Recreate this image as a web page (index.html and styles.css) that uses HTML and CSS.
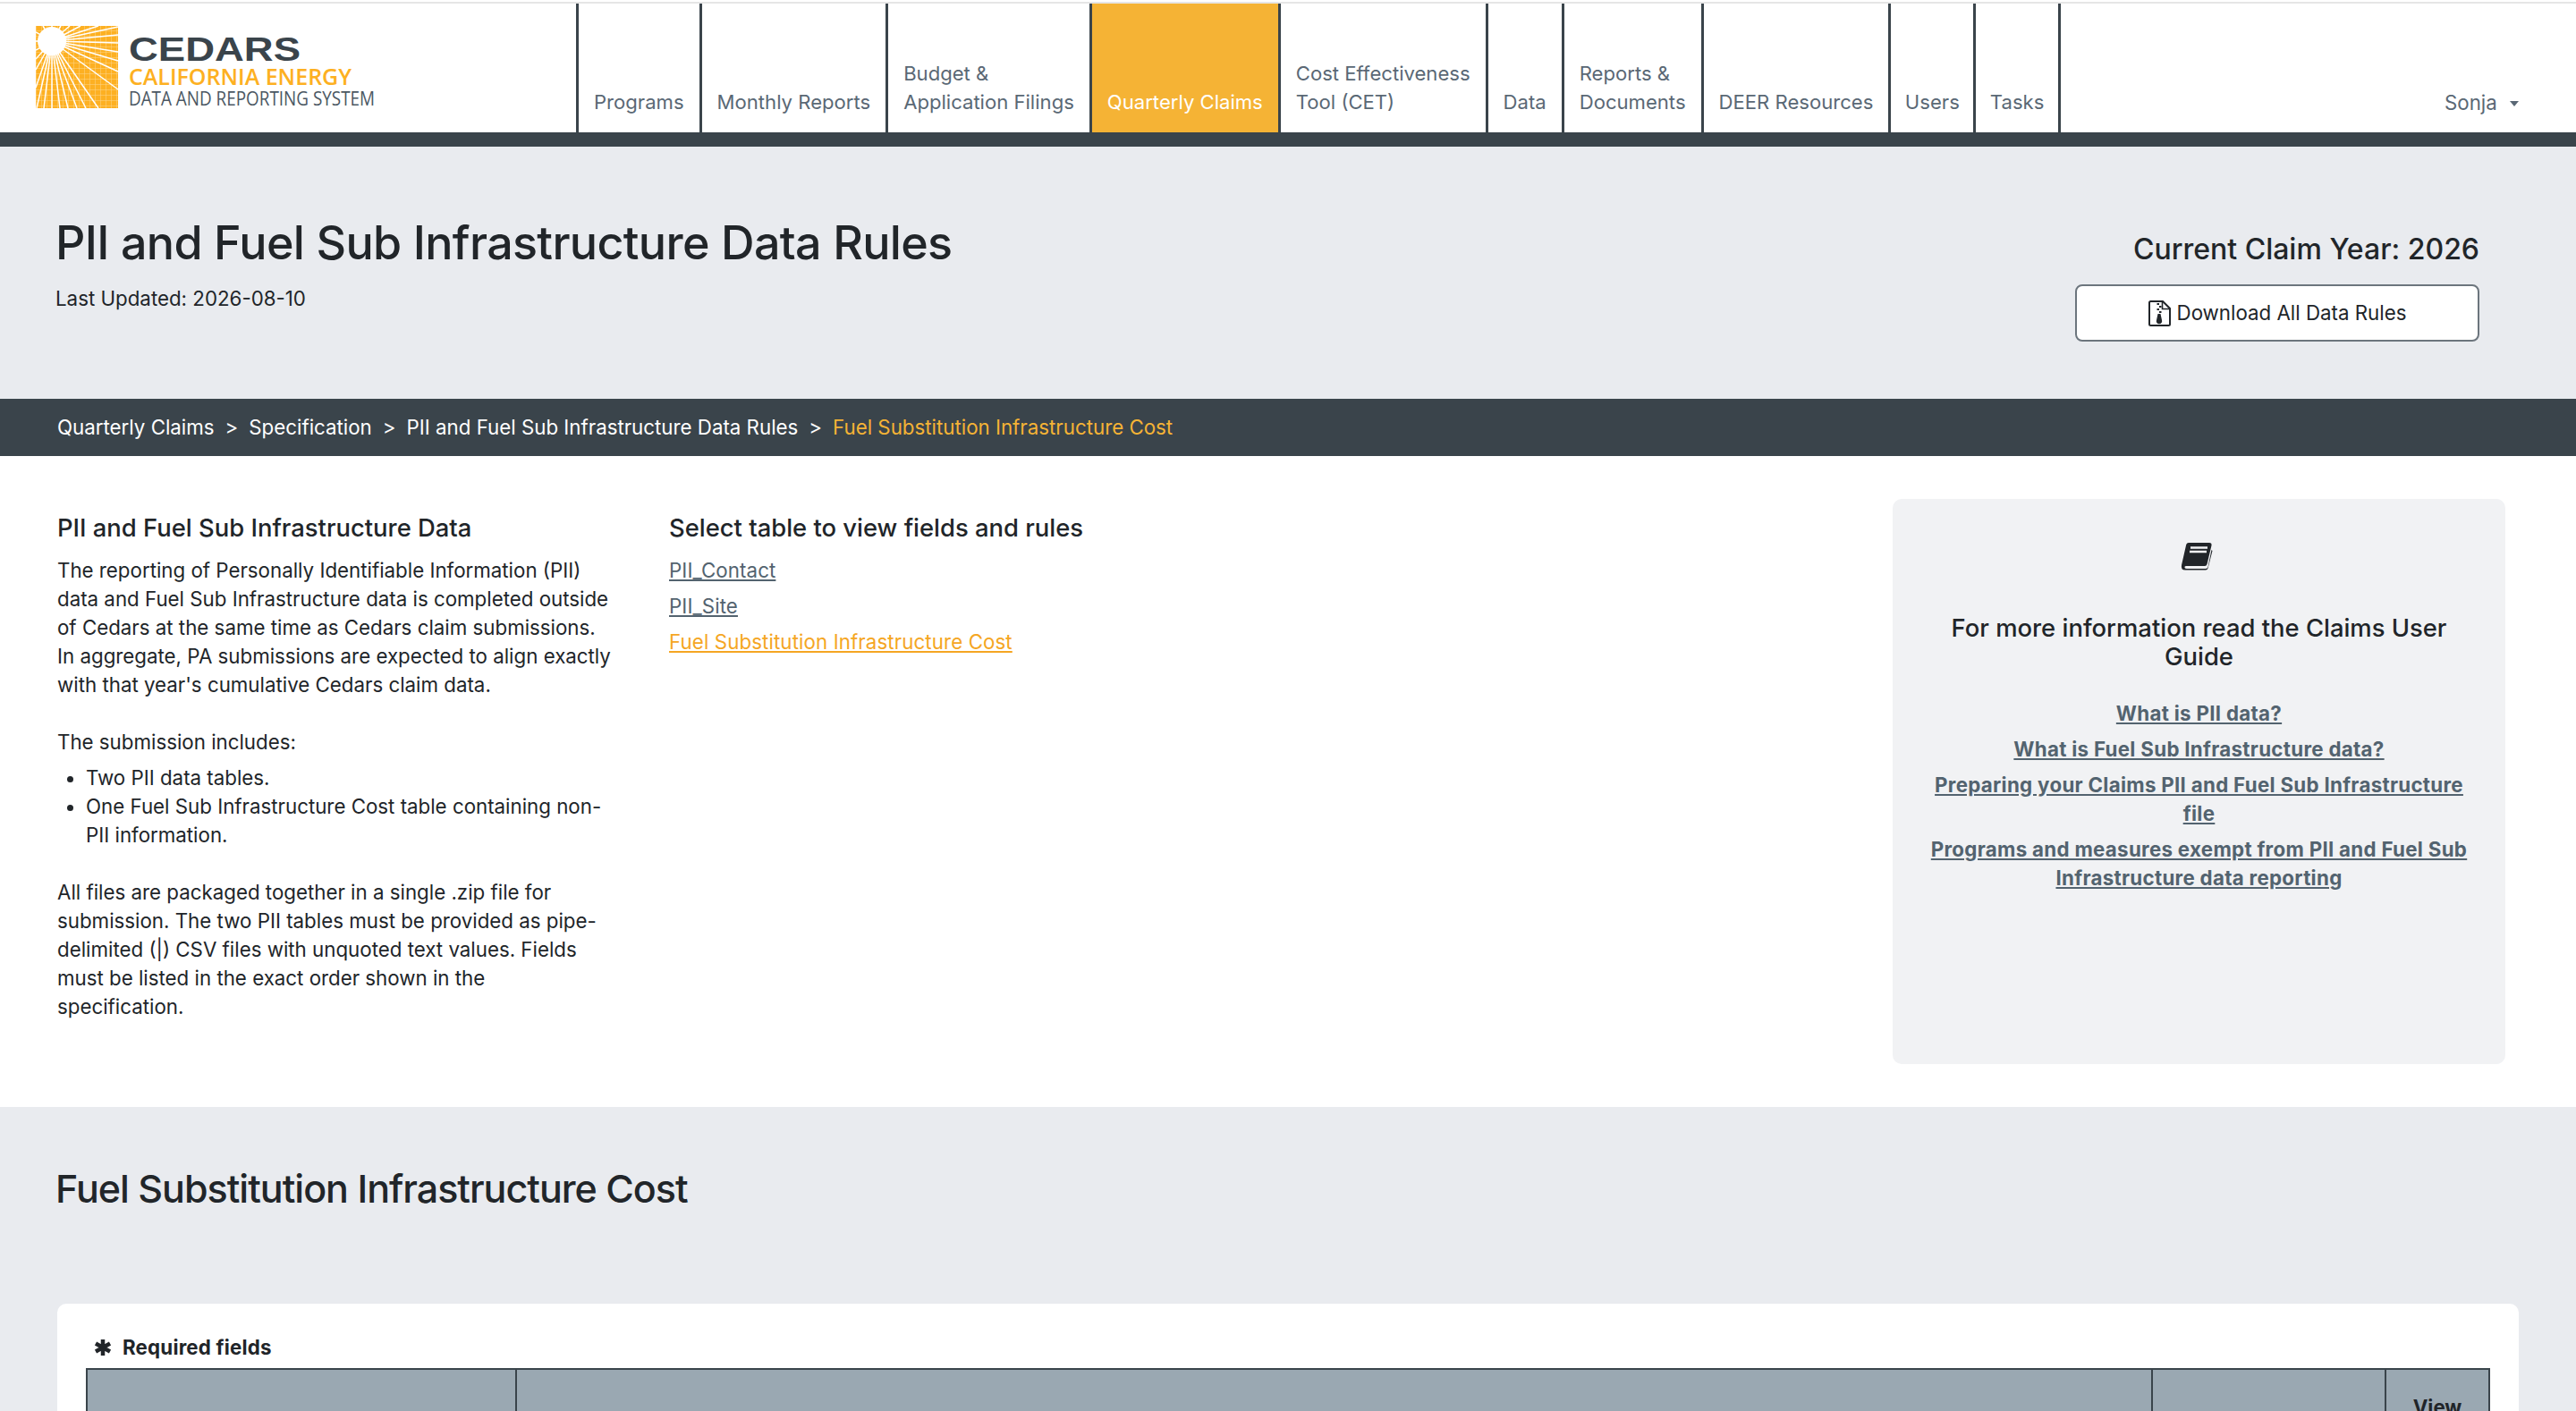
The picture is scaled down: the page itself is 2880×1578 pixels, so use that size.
FILE: index.html
```html
<!DOCTYPE html>
<html>
<head>
	<meta charset="utf-8">
	<title>PII and Fuel Sub Infrastructure Data Rules</title>
	<link rel="stylesheet" href="styles.css">
</head>
<body>
	<header class="topbar">
		<div class="brand">
			<svg class="logo" width="430" height="100" viewBox="0 0 430 100">
				<defs>
					<pattern id="grid" width="6" height="6" patternUnits="userSpaceOnUse">
						<rect width="6" height="6" fill="#fdb022"/>
						<path d="M0 0H6M0 0V6" stroke="#fed68a" stroke-width="1"/>
					</pattern>
				</defs>
				<rect x="0" y="1" width="92" height="92" fill="url(#grid)"/>
				<g stroke="#fff" stroke-width="1.5" fill="none">
					<path d="M18 18L92 2M18 18L92 11M18 18L92 20M18 18L92 30M18 18L92 40M18 18L92 52M18 18L92 72M18 18L70 93M18 18L56 93M18 18L46 93M18 18L36 93M18 18L27 93M18 18L18 93M18 18L9 93M18 18L1 93M18 18L0 70M18 18L0 50M18 18L0 38M18 18L0 28M18 18L0 18M18 18L0 8M18 18L8 1M18 18L18 1M18 18L28 1M18 18L38 1M18 18L50 1M18 18L70 1"/>
				</g>
				<circle cx="18" cy="18" r="16" fill="#fff"/>
				<text class="logo-name" x="104" y="40" textLength="192" lengthAdjust="spacingAndGlyphs">CEDARS</text>
				<text class="logo-state" x="104" y="67" textLength="249" lengthAdjust="spacingAndGlyphs">CALIFORNIA ENERGY</text>
				<text class="logo-sub" x="104" y="90" textLength="275" lengthAdjust="spacingAndGlyphs">DATA AND REPORTING SYSTEM</text>
			</svg>
		</div>
		<nav class="mainnav">
			<a href="#">Programs</a>
			<a href="#">Monthly Reports</a>
			<a href="#">Budget &amp;<br>Application Filings</a>
			<a href="#" class="active">Quarterly Claims</a>
			<a href="#">Cost Effectiveness<br>Tool (CET)</a>
			<a href="#">Data</a>
			<a href="#">Reports &amp;<br>Documents</a>
			<a href="#">DEER Resources</a>
			<a href="#" class="narrow">Users</a>
			<a href="#" class="narrow">Tasks</a>
		</nav>
		<a href="#" class="usermenu">Sonja <span class="caret"></span></a>
	</header>
	<div class="navband"></div>

	<section class="pagehead">
		<div>
			<h1>PII and Fuel Sub Infrastructure Data Rules</h1>
			<p class="updated">Last Updated: 2026-08-10</p>
		</div>
		<div class="claimyear">
			<h4>Current Claim Year: 2026</h4>
			<a href="#" class="btn-download">
				<svg width="25" height="29" viewBox="0 0 25 29">
					<path d="M1 2.5Q1 1 2.5 1H16L24 9V26.500Q24 28 22.500 28H2.500Q1 28 1 26.500Z" fill="none" stroke="#212529" stroke-width="2"/>
					<path d="M15.500 1.500V9.500H23.500" fill="none" stroke="#212529" stroke-width="1.600"/>
					<path d="M9.500 3h2.500v2H9.500zM12 6h2.500v2H12zM9.500 9h2.500v2H9.500zM12 12h2.500v2H12z" fill="#212529"/>
					<path d="M10.500 15h3l1.500 7a3.200 3.200 0 1 1-6 0z" fill="#212529"/>
				</svg>
				Download All Data Rules
			</a>
		</div>
	</section>

	<div class="crumbs">
		<a href="#">Quarterly Claims</a><span class="sep">&gt;</span><a href="#">Specification</a><span class="sep">&gt;</span><a href="#">PII and Fuel Sub Infrastructure Data Rules</a><span class="sep">&gt;</span><span class="current">Fuel Substitution Infrastructure Cost</span>
	</div>

	<section class="intro">
		<div class="intro-text">
			<h5>PII and Fuel Sub Infrastructure Data</h5>
			<p>The reporting of Personally Identifiable Information (PII) data and Fuel Sub Infrastructure data is completed outside of Cedars at the same time as Cedars claim submissions. In aggregate, PA submissions are expected to align exactly with that year's cumulative Cedars claim data.</p>
			<p class="lead-in">The submission includes:</p>
			<ul>
				<li>Two PII data tables.</li>
				<li>One Fuel Sub Infrastructure Cost table containing non-PII information.</li>
			</ul>
			<p>All files are packaged together in a single .zip file for submission. The two PII tables must be provided as pipe-delimited (|) CSV files with unquoted text values. Fields must be listed in the exact order shown in the specification.</p>
		</div>
		<div class="intro-tables">
			<h5>Select table to view fields and rules</h5>
			<a href="#">PII_Contact</a>
			<a href="#">PII_Site</a>
			<a href="#" class="selected">Fuel Substitution Infrastructure Cost</a>
		</div>
		<aside class="guide">
			<svg class="book" width="36" height="32" viewBox="0 0 36 32">
				<path d="M9 1H32Q35 1 34.500 4L29.500 25Q29 27 27 27H6Q4 27 4.500 29Q5 30 7 30H28Q30 30 30.500 28L34.500 9L35.500 10L30.500 29.500Q30 31.500 28 31.500H5Q0 31.500 1 26L6 4Q6.500 1 9 1Z" fill="#212529"/>
				<path d="M8 3H32L27 25H4Z" fill="#212529"/>
				<path d="M11 6.500H30M10 11H29" stroke="#f1f2f4" stroke-width="2.400"/>
			</svg>
			<h5>For more information read the Claims User Guide</h5>
			<a href="#">What is PII data?</a>
			<a href="#">What is Fuel Sub Infrastructure data?</a>
			<a href="#">Preparing your Claims PII and Fuel Sub Infrastructure file</a>
			<a href="#">Programs and measures exempt from PII and Fuel Sub Infrastructure data reporting</a>
		</aside>
	</section>

	<section class="tablesection">
		<h2>Fuel Substitution Infrastructure Cost</h2>
		<div class="tablecard">
			<p class="required">
				<svg width="20" height="20" viewBox="0 0 20 20"><path d="M10 1V19M2 5.500L18 14.500M18 5.500L2 14.500" stroke="#212529" stroke-width="4.500"/></svg>
				Required fields
			</p>
			<table class="fields">
				<thead>
					<tr>
						<th class="col-name"></th>
						<th class="col-desc"></th>
						<th class="col-type"></th>
						<th class="col-view">View</th>
					</tr>
				</thead>
			</table>
		</div>
	</section>
</body>
</html>
```

FILE: styles.css
```css
html, body {
	height: 100%;
	overflow: hidden;
}
body {
	margin: 0;
	background-color: #fff;
	color: #212529;
	font-family: Inter, "Liberation Sans", sans-serif;
	font-size: 22.3px;
	line-height: 32px;
}
a {
	color: #53636f;
}
h1, h2, h4, h5, p {
	margin: 0;
}

/* top navigation */
.topbar {
	display: flex;
	height: 144px;
	margin-top: 2px;
	border-top: 2px solid #e6e6e6;
	padding-right: 64px;
}
.brand {
	width: 644px;
	flex: none;
	padding: 24px 0 0 40px;
	box-sizing: border-box;
}
.logo {
	display: block;
}
.logo-name {
	font-family: "Liberation Sans", sans-serif;
	font-weight: bold;
	font-size: 36px;
	fill: #3a444b;
}
.logo-state {
	font-family: "Open Sans", sans-serif;
	font-size: 25px;
	font-weight: 600;
	fill: #fdb022;
}
.logo-sub {
	font-family: "Open Sans", sans-serif;
	font-size: 21px;
	fill: #4c5863;
}
.mainnav {
	display: flex;
	border-left: 3.5px solid #3a444b;
	font-size: 22.1px;
}
.mainnav a {
	display: flex;
	align-items: flex-end;
	padding: 0 17px 18px;
	border-right: 3.5px solid #3a444b;
	color: #5a6875;
	text-decoration: none;
}
.mainnav a.narrow {
	padding: 0 15.500px 18px;
}
.mainnav a.active {
	background-color: #f5b335;
	color: #fff;
}
.usermenu {
	margin-left: auto;
	align-self: flex-end;
	padding-bottom: 17px;
	color: #5a6875;
	text-decoration: none;
}
.caret {
	display: inline-block;
	margin-left: 8px;
	vertical-align: 4px;
	border-top: 6px solid #5a6875;
	border-left: 5px solid transparent;
	border-right: 5px solid transparent;
}
.navband {
	height: 16px;
	background-color: #3a444b;
}

/* page title block */
.pagehead {
	display: flex;
	justify-content: space-between;
	height: 282px;
	box-sizing: border-box;
	padding: 76px 108px 0 62px;
	background-color: #e9ebef;
}
.pagehead h1 {
	font-size: 52px;
	font-weight: 500;
	line-height: 64px;
	letter-spacing: -0.66px;
}
.updated {
	margin-top: 14px;
}
.claimyear {
	width: 452px;
	text-align: right;
	padding-top: 17px;
}
.claimyear h4 {
	font-size: 32px;
	font-weight: 500;
	line-height: 44px;
}
.btn-download {
	display: flex;
	align-items: center;
	justify-content: center;
	gap: 7px;
	height: 64px;
	box-sizing: border-box;
	margin-top: 17px;
	background-color: #fff;
	border: 2px solid #6c757d;
	border-radius: 8px;
	color: #212529;
	text-decoration: none;
}

/* breadcrumb */
.crumbs {
	height: 64px;
	padding-left: 64px;
	background-color: #3a444b;
	line-height: 64px;
	color: #fff;
}
.crumbs a {
	color: #fff;
	text-decoration: none;
}
.crumbs .sep {
	margin: 0 12px;
}
.crumbs .current {
	color: #f5b335;
}

/* intro columns */
.intro {
	display: grid;
	grid-template-columns: 624px 1428px 685px;
	height: 728px;
	box-sizing: border-box;
	padding: 48px 0 0 64px;
}
.intro h5 {
	font-size: 27.4px;
	font-weight: 500;
	line-height: 32px;
	margin-top: 16px;
	margin-bottom: 16px;
}
.intro-text p {
	margin-bottom: 32px;
}
.intro-text p.lead-in {
	margin-bottom: 8px;
}
.intro-text ul {
	margin: 0 0 32px;
	padding-left: 32px;
}
.intro-tables {
	padding-left: 60px;
}
.intro-tables a {
	display: block;
	margin-bottom: 8px;
	letter-spacing: 0.1px;
}
.intro-tables a.selected {
	color: #f5a623;
}
.guide {
	height: 632px;
	box-sizing: border-box;
	padding: 48px 32px 0;
	background-color: #f1f2f4;
	border-radius: 10px;
	text-align: center;
}
.book {
	display: block;
	margin: 0 auto;
	transform: translateX(-3px);
}
.guide h5 {
	margin: 48px 0 32px;
}
.guide a {
	display: block;
	margin-bottom: 8px;
	font-weight: 700;
	letter-spacing: 0.3px;
}

/* table block */
.tablesection {
	height: 500px;
	padding: 0 64px;
	background-color: #e9ebef;
}
.tablesection h2 {
	margin-left: -2px;
	padding-top: 64px;
	height: 156px;
	box-sizing: border-box;
	font-size: 43px;
	font-weight: 500;
	line-height: 54px;
	letter-spacing: -1px;
}
.tablecard {
	margin-top: 64px;
	padding: 25px 32px 0;
	background-color: #fff;
	border-radius: 10px;
}
.required {
	display: flex;
	align-items: center;
	gap: 12px;
	height: 47px;
	padding-left: 9px;
	font-weight: 700;
	letter-spacing: 0.2px;
}
.fields {
	width: 100%;
	table-layout: fixed;
	border-collapse: collapse;
}
.fields th {
	height: 100px;
	padding: 26px 0 0;
	vertical-align: top;
	background-color: #9aa8b2;
	border: 2px solid #3a444b;
	border-bottom: none;
	font-weight: 700;
}
.col-name {
	width: 478px;
}
.col-type {
	width: 259px;
}
.col-view {
	width: 114px;
}
```
